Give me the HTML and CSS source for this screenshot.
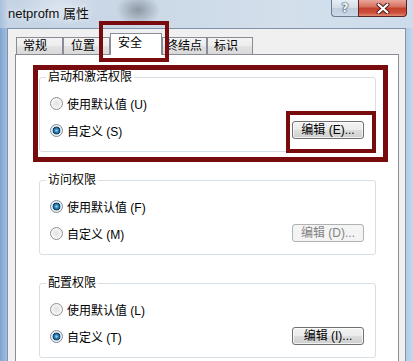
FILE: index.html
```html
<!DOCTYPE html>
<html lang="zh-CN">
<head>
<meta charset="utf-8">
<title>netprofm 属性</title>
<link rel="stylesheet" href="styles.css">
</head>
<body>
<div class="window">
  <div class="titlebar">
    <span class="title">netprofm 属性</span>
    <div class="caption">
      <div class="cap-btn help"><span class="q">?</span></div>
      <div class="cap-btn close">
        <svg class="x-icon" width="14" height="11" viewBox="0 0 14 11">
          <path d="M2.5 1.5 L11.5 9.5 M11.5 1.5 L2.5 9.5" stroke="#4a1a1a" stroke-width="4" stroke-linecap="round" fill="none"/>
          <path d="M2.5 1.5 L11.5 9.5 M11.5 1.5 L2.5 9.5" stroke="#ffffff" stroke-width="2.2" stroke-linecap="round" fill="none"/>
        </svg>
      </div>
    </div>
  </div>
  <div class="frame">
    <div class="client">
      <div class="tabs">
        <div class="tab w1">常规</div>
        <div class="tab w2">位置</div>
        <div class="tab selected">安全</div>
        <div class="tab w4">终结点</div>
        <div class="tab w5">标识</div>
      </div>
      <div class="panel">
        <fieldset class="group">
          <legend>启动和激活权限</legend>
          <div class="group-body">
            <div class="row"><span class="radio"></span><span class="label">使用默认值 (U)</span></div>
            <div class="row second"><span class="radio checked"></span><span class="label">自定义 (S)</span><span class="btn">编辑 (E)...</span></div>
          </div>
        </fieldset>
        <fieldset class="group">
          <legend>访问权限</legend>
          <div class="group-body">
            <div class="row"><span class="radio checked"></span><span class="label">使用默认值 (F)</span></div>
            <div class="row second"><span class="radio"></span><span class="label">自定义 (M)</span><span class="btn disabled">编辑 (D)...</span></div>
          </div>
        </fieldset>
        <fieldset class="group">
          <legend>配置权限</legend>
          <div class="group-body">
            <div class="row"><span class="radio"></span><span class="label">使用默认值 (L)</span></div>
            <div class="row second"><span class="radio checked"></span><span class="label">自定义 (T)</span><span class="btn">编辑 (I)...</span></div>
          </div>
        </fieldset>
      </div>
    </div>
  </div>
</div>
<div class="mark mark-tab"></div>
<div class="mark mark-group"></div>
<div class="mark mark-btn"></div>
</body>
</html>
```
FILE: styles.css
```css
html, body {
  margin: 0;
  padding: 0;
}
body {
  width: 413px;
  height: 361px;
  overflow: hidden;
  position: relative;
  font-family: "Liberation Sans", "Noto Sans CJK SC", sans-serif;
  font-size: 12px;
  color: #000;
  background:
    radial-gradient(ellipse 22px 16px at 138px 10px, rgba(90, 100, 110, 0.55), rgba(90, 100, 110, 0) 100%),
    radial-gradient(ellipse 40px 20px at 60px 6px, rgba(255, 255, 255, 0.35), rgba(255, 255, 255, 0) 100%),
    linear-gradient(to right, #a7c0dc 0, #c5d4e5 8px, #cbd8e6 35%, #d3dfeb 70%, #cddcec 100%);
}
.window {
  display: flex;
  flex-direction: column;
  height: 361px;
}
.titlebar {
  height: 28px;
  display: flex;
  align-items: flex-start;
  flex-shrink: 0;
}
.title {
  height: 28px;
  line-height: 28px;
  padding-left: 8px;
  font-size: 13px;
  font-family: "Liberation Sans", "Noto Sans CJK SC", sans-serif;
  color: #101010;
  text-shadow: 0 0 6px rgba(255, 255, 255, 0.9);
}
.caption {
  margin-left: auto;
  margin-right: 6px;
  display: flex;
}
.cap-btn {
  height: 17px;
  box-sizing: border-box;
  display: flex;
  align-items: center;
  justify-content: center;
}
.help {
  width: 27px;
  border: 1px solid #6a7b90;
  border-top: none;
  border-right: none;
  border-bottom-left-radius: 4px;
  background: linear-gradient(#e6edf5 0%, #d4dee9 48%, #bfcddc 52%, #cbd9e8 100%);
}
.q {
  font-family: "DejaVu Sans", sans-serif;
  font-size: 12px;
  font-weight: bold;
  line-height: 14px;
  color: #f4f6f9;
  text-shadow: 0 0 1px #3c4d62, 0 0 1px #3c4d62, 0 0 2px #3c4d62;
}
.close {
  width: 49px;
  border: 1px solid #5b2424;
  border-top: none;
  border-bottom-right-radius: 4px;
  background: linear-gradient(#e8a79c 0%, #d7705f 42%, #c2412d 52%, #cd4f3b 80%, #e08a72 100%);
}
.x-icon {
  display: block;
}
.frame {
  flex: 1;
  display: flex;
  min-height: 0;
  background: linear-gradient(to right, #7fa3cf 0, #a3bfe0 7px, transparent 7px, transparent 406px, #b2cbe8 406px, #c4d8ee 100%);
}
.client {
  margin-left: 7px;
  width: 399px;
  box-sizing: border-box;
  background: #f0f0f0;
  border: 1px solid #8193a9;
  border-bottom: none;
  padding: 4px 6px 0 7px;
  display: flex;
  flex-direction: column;
}
.tabs {
  display: flex;
  align-items: flex-end;
  height: 21px;
  padding-left: 1px;
  flex-shrink: 0;
}
.tab {
  box-sizing: border-box;
  height: 17px;
  line-height: 16px;
  border: 1px solid #898c95;
  border-bottom: none;
  padding-left: 6px;
  font-size: 12px;
  white-space: nowrap;
  background: linear-gradient(#f4f4f4 0%, #ececec 50%, #e2e2e2 51%, #d9d9d9 100%);
}
.w1 { width: 47px; }
.w2 { width: 47px; padding-left: 7px; }
.w4 { width: 45px; padding-left: 3px; }
.w5 { width: 46px; }
.tab.selected {
  width: 52px;
  height: 22px;
  line-height: 18px;
  padding-left: 7px;
  margin-bottom: -1px;
  background: #fff;
  position: relative;
  z-index: 1;
}
.panel {
  flex: 1;
  background: #fff;
  border: 1px solid #898c95;
  border-bottom: none;
  padding: 15px 22px 0 23px;
  display: flex;
  flex-direction: column;
  gap: 21px;
}
.group {
  margin: 0;
  padding: 0;
  border: 1px solid #d5dfe5;
  border-radius: 3px;
  min-width: 0;
}
.group legend {
  margin-left: 6px;
  padding: 0 2px;
  line-height: 14px;
  font-size: 12px;
}
.group-body {
  padding: 9px 11px 11px 10px;
}
.row {
  height: 20px;
  display: flex;
  align-items: center;
}
.row.second {
  margin-top: 7px;
}
.radio {
  width: 13px;
  height: 13px;
  box-sizing: border-box;
  border-radius: 50%;
  border: 1px solid #8e9092;
  background: radial-gradient(circle 6px at 50% 50%, #e2e2e2 0, #ececec 50%, #fafafa 100%);
  flex-shrink: 0;
}
.radio.checked {
  border-color: #7b8a97;
  background: radial-gradient(circle 5.5px at 50% 50%, #8fd3f2 0, #3b94c6 1.6px, #165582 3px, #0f3e62 3.6px, #dfe3e6 4.2px, #f6f6f6 5.5px);
}
.label {
  margin-left: 4px;
  white-space: nowrap;
}
.btn {
  margin-left: auto;
  width: 72px;
  height: 18px;
  box-sizing: border-box;
  border: 1px solid #707070;
  border-radius: 3px;
  background: linear-gradient(#f3f3f3 0%, #ebebeb 48%, #dddddd 52%, #cfcfcf 100%);
  box-shadow: inset 0 0 0 1px rgba(255, 255, 255, 0.7);
  display: flex;
  align-items: center;
  justify-content: center;
  line-height: 14px;
  white-space: nowrap;
}
.btn.disabled {
  border-color: #adb2b5;
  background: #f4f4f4;
  box-shadow: none;
  color: #838383;
}
.mark {
  position: absolute;
  box-sizing: border-box;
  border: 4px solid #770b0e;
}
.mark-tab {
  left: 99px;
  top: 21px;
  width: 70px;
  height: 41px;
}
.mark-group {
  left: 33px;
  top: 65px;
  width: 355px;
  height: 97px;
  border-width: 5px 5px 5px 5px;
}
.mark-btn {
  left: 286px;
  top: 111px;
  width: 90px;
  height: 42px;
}
```
